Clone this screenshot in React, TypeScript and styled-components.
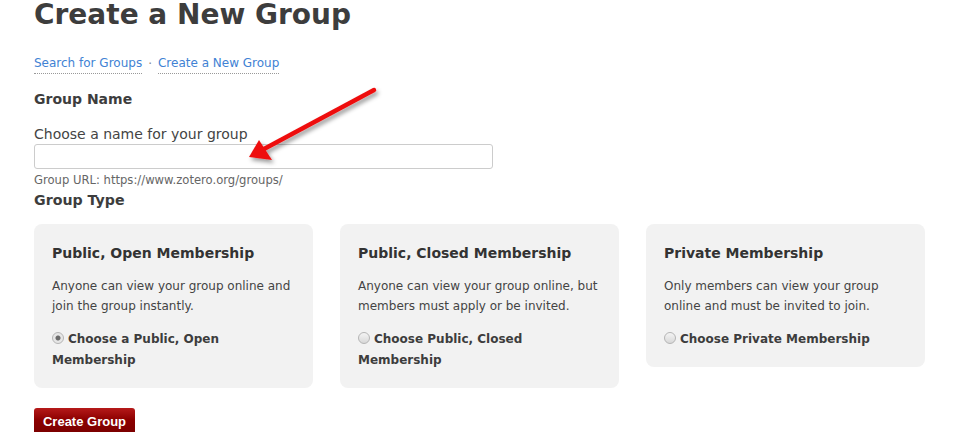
import React from "react";
import styled, { createGlobalStyle } from "styled-components";

const GlobalStyle = createGlobalStyle`
  html, body {
    margin: 0;
    padding: 0;
    background: #ffffff;
  }
  body {
    font-family: Verdana, "DejaVu Sans", sans-serif;
    color: #444444;
  }
`;

const memberships = [
  {
    title: "Public, Open Membership",
    text: "Anyone can view your group online and join the group instantly.",
    choice: "Choose a Public, Open Membership",
    checked: true,
  },
  {
    title: "Public, Closed Membership",
    text: "Anyone can view your group online, but members must apply or be invited.",
    choice: "Choose Public, Closed Membership",
    checked: false,
  },
  {
    title: "Private Membership",
    text: "Only members can view your group online and must be invited to join.",
    choice: "Choose Private Membership",
    checked: false,
  },
];

export default function App() {
  return (
    <Page>
      <GlobalStyle />
      <Title>Create a New Group</Title>
      <Nav>
        <NavLink>Search for Groups</NavLink>
        <Dot>·</Dot>
        <NavLink>Create a New Group</NavLink>
      </Nav>
      <SectionHeading>Group Name</SectionHeading>
      <FieldLabel>Choose a name for your group</FieldLabel>
      <NameInput />
      <Hint>Group URL: https://www.zotero.org/groups/</Hint>
      <TypeHeading>Group Type</TypeHeading>
      <Cards>
        {memberships.map((m) => (
          <Card key={m.title}>
            <CardTitle>{m.title}</CardTitle>
            <CardText>{m.text}</CardText>
            <Choice>
              <Radio $checked={m.checked} />
              {m.choice}
            </Choice>
          </Card>
        ))}
      </Cards>
      <SubmitButton>Create Group</SubmitButton>
      <Arrow width="150" height="95" viewBox="0 0 150 95">
        <defs>
          <filter id="shadow" x="-20%" y="-20%" width="140%" height="140%">
            <feDropShadow dx="2" dy="3" stdDeviation="2" floodColor="#000" floodOpacity="0.4" />
          </filter>
        </defs>
        <g filter="url(#shadow)">
          <line x1="134" y1="10" x2="24" y2="69" stroke="#ee1111" strokeWidth="4.5" strokeLinecap="round" />
          <polygon points="9,77 19,60 32,80" fill="#ee1111" />
        </g>
      </Arrow>
    </Page>
  );
}

const Page = styled.div`
  position: relative;
  width: 955px;
  height: 432px;
  overflow: hidden;
  padding: 0 34px;
  box-sizing: border-box;
`;

const Title = styled.h1`
  margin: -3px 0 0;
  font-size: 28px;
  line-height: 36px;
  font-weight: bold;
  color: #3d3d3d;
`;

const Nav = styled.div`
  margin-top: 21px;
  display: flex;
  align-items: center;
  gap: 6px;
  font-size: 12px;
  line-height: 18px;
`;

const NavLink = styled.a`
  color: #4182d4;
  text-decoration: none;
  border-bottom: 1px dotted #999;
  padding-bottom: 1px;
  cursor: pointer;
`;

const Dot = styled.span`
  color: #888;
`;

const SectionHeading = styled.h3`
  margin: 15px 0 0;
  font-size: 14px;
  line-height: 20px;
  font-weight: bold;
  color: #3d3d3d;
`;

const FieldLabel = styled.label`
  display: block;
  margin-top: 15px;
  font-size: 14px;
  line-height: 20px;
  color: #444;
`;

const NameInput = styled.input`
  display: block;
  width: 459px;
  height: 25px;
  margin-top: 0;
  box-sizing: border-box;
  border: 1px solid #cccccc;
  border-radius: 3px;
  outline: none;
`;

const Hint = styled.div`
  margin-top: 4px;
  font-size: 11.6px;
  line-height: 15px;
  color: #666;
`;

const TypeHeading = styled.h3`
  margin: 2px 0 0;
  font-size: 14.2px;
  line-height: 20px;
  font-weight: bold;
  color: #3d3d3d;
`;

const Cards = styled.div`
  margin-top: 14px;
  display: grid;
  grid-template-columns: repeat(3, 279px);
  column-gap: 27px;
  align-items: start;
`;

const Card = styled.div`
  background: #f2f2f2;
  border-radius: 8px;
  padding: 19px 18px 17px;
`;

const CardTitle = styled.h4`
  margin: 0;
  font-size: 14px;
  line-height: 20px;
  font-weight: bold;
  color: #333;
`;

const CardText = styled.p`
  margin: 13px 0 0;
  font-size: 12px;
  line-height: 20px;
  color: #444;
`;

const Choice = styled.label`
  display: block;
  margin-top: 13px;
  font-size: 12px;
  line-height: 21px;
  font-weight: bold;
  color: #3d3d3d;
`;

const Radio = styled.span<{ $checked: boolean }>`
  display: inline-block;
  width: 12px;
  height: 12px;
  margin-right: 4px;
  border-radius: 50%;
  border: 1px solid #b5b5b5;
  box-sizing: border-box;
  vertical-align: -1px;
  background: ${(p) =>
    p.$checked
      ? "radial-gradient(circle, #6a6a6a 0 2px, #e6e6e6 3px)"
      : "linear-gradient(#f4f4f4, #d8d8d8)"};
`;

const SubmitButton = styled.button`
  display: block;
  margin-top: 20px;
  width: 101px;
  height: 26px;
  padding: 0;
  border: none;
  border-radius: 3px;
  background: linear-gradient(#b51a1a, #8c0000 45%, #7a0000);
  color: #ffffff;
  font-family: "Liberation Sans", Arial, sans-serif;
  font-weight: bold;
  font-size: 13px;
  cursor: pointer;
`;

const Arrow = styled.svg`
  position: absolute;
  left: 240px;
  top: 80px;
`;
